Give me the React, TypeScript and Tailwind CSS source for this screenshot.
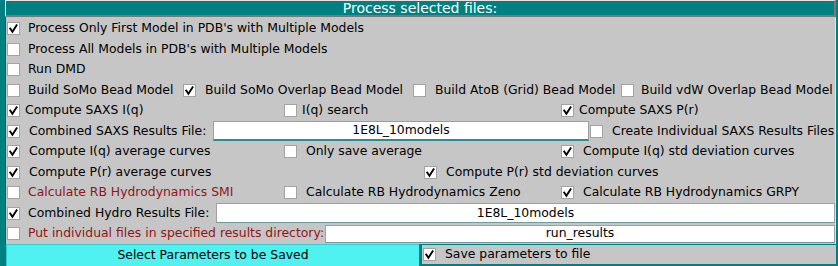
import React from "react";

const Box = ({ checked }: { checked?: boolean }) => (
  <span className="w-[13px] h-[13px] bg-white border border-[#a3a3a3] flex items-center justify-center shrink-0">
    {checked && (
      <svg width="11" height="11" viewBox="0 0 11 11">
        <path d="M2.2 5.6 L4.4 8.8 L8.6 2.2" stroke="#000" strokeWidth="1.9" fill="none" strokeLinecap="square" strokeLinejoin="miter" />
      </svg>
    )}
  </span>
);

const Item = ({
  checked,
  label,
  gap = "ml-[8px]",
  red,
  className = "",
}: {
  checked?: boolean;
  label: string;
  gap?: string;
  red?: boolean;
  className?: string;
}) => (
  <div className={`flex items-center whitespace-nowrap ${className}`}>
    <Box checked={checked} />
    <span className={`${gap} ${red ? "text-[#921515]" : "text-black"}`}>{label}</span>
  </div>
);

const Row = ({ children, h = "h-[21px]", className = "" }: { children: React.ReactNode; h?: string; className?: string }) => (
  <div className={`${h} flex items-center pl-[1px] ${className}`}>{children}</div>
);

export default function App() {
  return (
    <div
      className="w-[838px] h-[266px] bg-[#008080] flex flex-col overflow-hidden text-[12.4px] leading-none"
      style={{ fontFamily: '"DejaVu Sans", "Liberation Sans", sans-serif' }}
    >
      <div className="h-[17px] ml-[5px] mr-[2px] shrink-0 flex items-center justify-center text-white text-[14px] border-t border-l border-t-[#e4e4e4] border-l-[#e4e4e4] border-b-2 border-r-2 border-b-[#857474] border-r-[#857474]">
        Process selected files:
      </div>
      <div className="ml-[5px] mr-[2px] h-[227px] shrink-0 bg-[#c6c6c6] border-l border-l-[#4a4a4a] border-r border-r-[#e2e2e2] flex flex-col pt-[1px]">
        <Row>
          <Item checked label="Process Only First Model in PDB's with Multiple Models" />
        </Row>
        <Row h="h-[20px]">
          <Item label="Process All Models in PDB's with Multiple Models" />
        </Row>
        <Row>
          <Item label="Run DMD" />
        </Row>
        <Row h="h-[20px]">
          <Item label="Build SoMo Bead Model" className="w-[176px]" />
          <Item checked label="Build SoMo Overlap Bead Model" gap="ml-[9px]" className="w-[230px]" />
          <Item label="Build AtoB (Grid) Bead Model" gap="ml-[9px]" className="w-[208px]" />
          <Item label="Build vdW Overlap Bead Model" gap="ml-[7px]" />
        </Row>
        <Row>
          <div className="grid grid-cols-[277px_277px_1fr] w-full">
            <Item checked label="Compute SAXS I(q)" gap="ml-[5px]" />
            <Item label="I(q) search" gap="ml-[5px]" />
            <Item checked label="Compute SAXS P(r)" gap="ml-[5px]" />
          </div>
        </Row>
        <Row h="h-[20px]">
          <Item checked label="Combined SAXS Results File:" gap="ml-[9px]" className="w-[206px]" />
          <div className="w-[376px] h-[20px] bg-white border border-[#9e9e9e] border-b-2 border-b-[#2f8c8c] flex items-center justify-center shrink-0">
            1E8L_10models
          </div>
          <Item label="Create Individual SAXS Results Files" gap="ml-[9px]" className="ml-[1px]" />
        </Row>
        <Row>
          <div className="grid grid-cols-[277px_277px_1fr] w-full">
            <Item checked label="Compute I(q) average curves" gap="ml-[9px]" />
            <Item label="Only save average" gap="ml-[9px]" />
            <Item checked label="Compute I(q) std deviation curves" gap="ml-[9px]" />
          </div>
        </Row>
        <Row h="h-[20px]">
          <div className="grid grid-cols-[417px_1fr] w-full">
            <Item checked label="Compute P(r) average curves" gap="ml-[9px]" />
            <Item checked label="Compute P(r) std deviation curves" gap="ml-[9px]" />
          </div>
        </Row>
        <Row>
          <div className="grid grid-cols-[277px_277px_1fr] w-full">
            <Item label="Calculate RB Hydrodynamics SMI" red />
            <Item label="Calculate RB Hydrodynamics Zeno" gap="ml-[9px]" />
            <Item checked label="Calculate RB Hydrodynamics GRPY" gap="ml-[9px]" />
          </div>
        </Row>
        <Row h="h-[20px]">
          <Item checked label="Combined Hydro Results File:" className="w-[209px]" />
          <div className="flex-1 h-[20px] bg-white border border-[#a0a0a0] border-b-[#6f9c9c] flex items-center justify-center">
            1E8L_10models
          </div>
        </Row>
        <Row>
          <Item label="Put individual files in specified results directory:" red className="w-[318px]" />
          <div className="flex-1 h-[18px] bg-white border border-[#a0a0a0] border-b-[#6f9c9c] flex items-center justify-center">
            run_results
          </div>
        </Row>
      </div>
      <div className="flex h-[22px] ml-[6px] mr-[2px] shrink-0">
        <div className="w-[413px] h-full bg-[#4ff2f0] border-l border-t border-[#2fcfcf] flex items-center justify-center text-black">
          Select Parameters to be Saved
        </div>
        <div className="flex-1 ml-[3px] mt-[1px] mb-[2px] bg-[#c6c6c6] flex items-center pl-[1px]">
          <Item checked label="Save parameters to file" gap="ml-[9px]" />
        </div>
      </div>
    </div>
  );
}
